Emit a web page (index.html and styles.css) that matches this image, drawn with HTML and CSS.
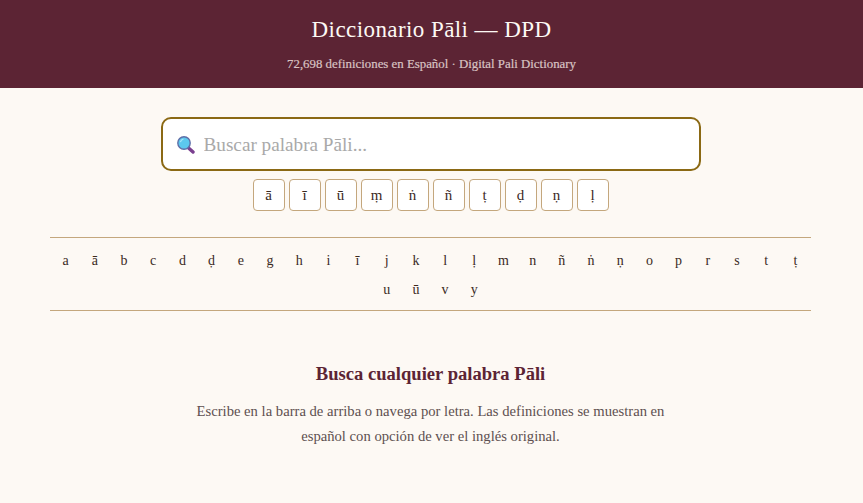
FILE: index.html
```html
<!DOCTYPE html>
<html lang="es">
<head>
  <meta charset="utf-8">
  <title>Diccionario Pāli — DPD</title>
  <link rel="stylesheet" href="styles.css">
</head>

<body>
  <header class="site-header">
    <h1>Diccionario Pāli — DPD</h1>
    <p>72,698 definiciones en Español · Digital Pali Dictionary</p>
  </header>

  <main class="container">
    <div class="search-box">
      <svg class="search-icon" viewBox="0 0 18 18" width="18" height="18" aria-hidden="true">
        <path d="M11 11.5l5 4.5" stroke="#7a3f8f" stroke-width="3.4" stroke-linecap="round"/>
        <circle cx="7" cy="7" r="6.2" fill="#5cc8ee" stroke="#5f6fa8" stroke-width="1.4"/>
        <path d="M3.4 6.2a3.8 3.8 0 0 1 3-3" fill="none" stroke="#a8e6f8" stroke-width="1.2"/>
      </svg>
      <input type="text" placeholder="Buscar palabra Pāli...">
    </div>

    <div class="keys">
      <button>ā</button>
      <button>ī</button>
      <button>ū</button>
      <button>ṃ</button>
      <button>ṅ</button>
      <button>ñ</button>
      <button>ṭ</button>
      <button>ḍ</button>
      <button>ṇ</button>
      <button>ḷ</button>
    </div>

    <nav class="alphabet">
      <a href="#">a</a><a href="#">ā</a><a href="#">b</a><a href="#">c</a><a href="#">d</a><a href="#">ḍ</a>
      <a href="#">e</a><a href="#">g</a><a href="#">h</a><a href="#">i</a><a href="#">ī</a><a href="#">j</a>
      <a href="#">k</a><a href="#">l</a><a href="#">ḷ</a><a href="#">m</a><a href="#">n</a><a href="#">ñ</a>
      <a href="#">ṅ</a><a href="#">ṇ</a><a href="#">o</a><a href="#">p</a><a href="#">r</a><a href="#">s</a>
      <a href="#">t</a><a href="#">ṭ</a><a href="#">u</a><a href="#">ū</a><a href="#">v</a><a href="#">y</a>
    </nav>

    <section class="welcome">
      <h2>Busca cualquier palabra Pāli</h2>
      <p>Escribe en la barra de arriba o navega por letra. Las definiciones se muestran en español con opción de ver el inglés original.</p>
    </section>
  </main>
</body>
</html>
```

FILE: styles.css
```css
body {
  margin: 0;
  background: #fdf9f4;
  color: #3b2a1e;
  font-family: "Liberation Serif", serif;
}
.site-header {
  height: 88px;
  box-sizing: border-box;
  padding-top: 16px;
  background: #5c2434;
  text-align: center;
}
.site-header h1 {
  margin: 0;
  font-size: 23px;
  line-height: 28px;
  font-weight: 400;
  letter-spacing: 0.42px;
  color: #fdf9f4;
}
.site-header p {
  margin: 12px 0 0;
  font-size: 12.85px;
  line-height: 16px;
  color: #d9c3c3;
  -webkit-text-stroke: 0.2px #d9c3c3;
}
.container {
  padding: 29px 52px 0 50px;
}
.search-box {
  display: flex;
  align-items: center;
  gap: 9px;
  box-sizing: border-box;
  width: 540px;
  height: 54px;
  margin: 0 auto;
  padding: 1px 14px 0;
  background: #fff;
  border: 2px solid #8b6914;
  border-radius: 10px;
}
.search-icon {
  flex: none;
}
.search-box input {
  flex: 1;
  min-width: 0;
  border: none;
  outline: none;
  padding: 0;
  font-family: inherit;
  font-size: 19.2px;
  color: #3b2a1e;
}
.search-box input::placeholder {
  color: #a9a9a9;
}
.keys {
  display: flex;
  justify-content: center;
  gap: 4px;
  margin-top: 8px;
}
.keys button {
  width: 32px;
  height: 32px;
  padding: 0;
  background: #fff;
  border: 1px solid #c4a77d;
  border-radius: 4px;
  font-family: inherit;
  font-size: 15px;
  color: #3b2a1e;
}
.alphabet {
  display: flex;
  flex-wrap: wrap;
  justify-content: center;
  gap: 4px;
  margin-top: 26px;
  padding: 10px 0 8px;
  border-top: 1px solid #c4a77d;
  border-bottom: 1px solid #c4a77d;
}
.alphabet a {
  width: 25.2px;
  height: 25px;
  line-height: 25px;
  text-align: center;
  font-size: 14px;
  color: #3b2a1e;
  text-decoration: none;
}
.welcome {
  margin-top: 50px;
  text-align: center;
}
.welcome h2 {
  margin: 0;
  font-size: 18.6px;
  line-height: 26px;
  font-weight: 700;
  color: #5c2434;
}
.welcome p {
  width: 500px;
  margin: 12px auto 0;
  font-size: 14.65px;
  line-height: 25px;
  color: #5e5050;
}
```
